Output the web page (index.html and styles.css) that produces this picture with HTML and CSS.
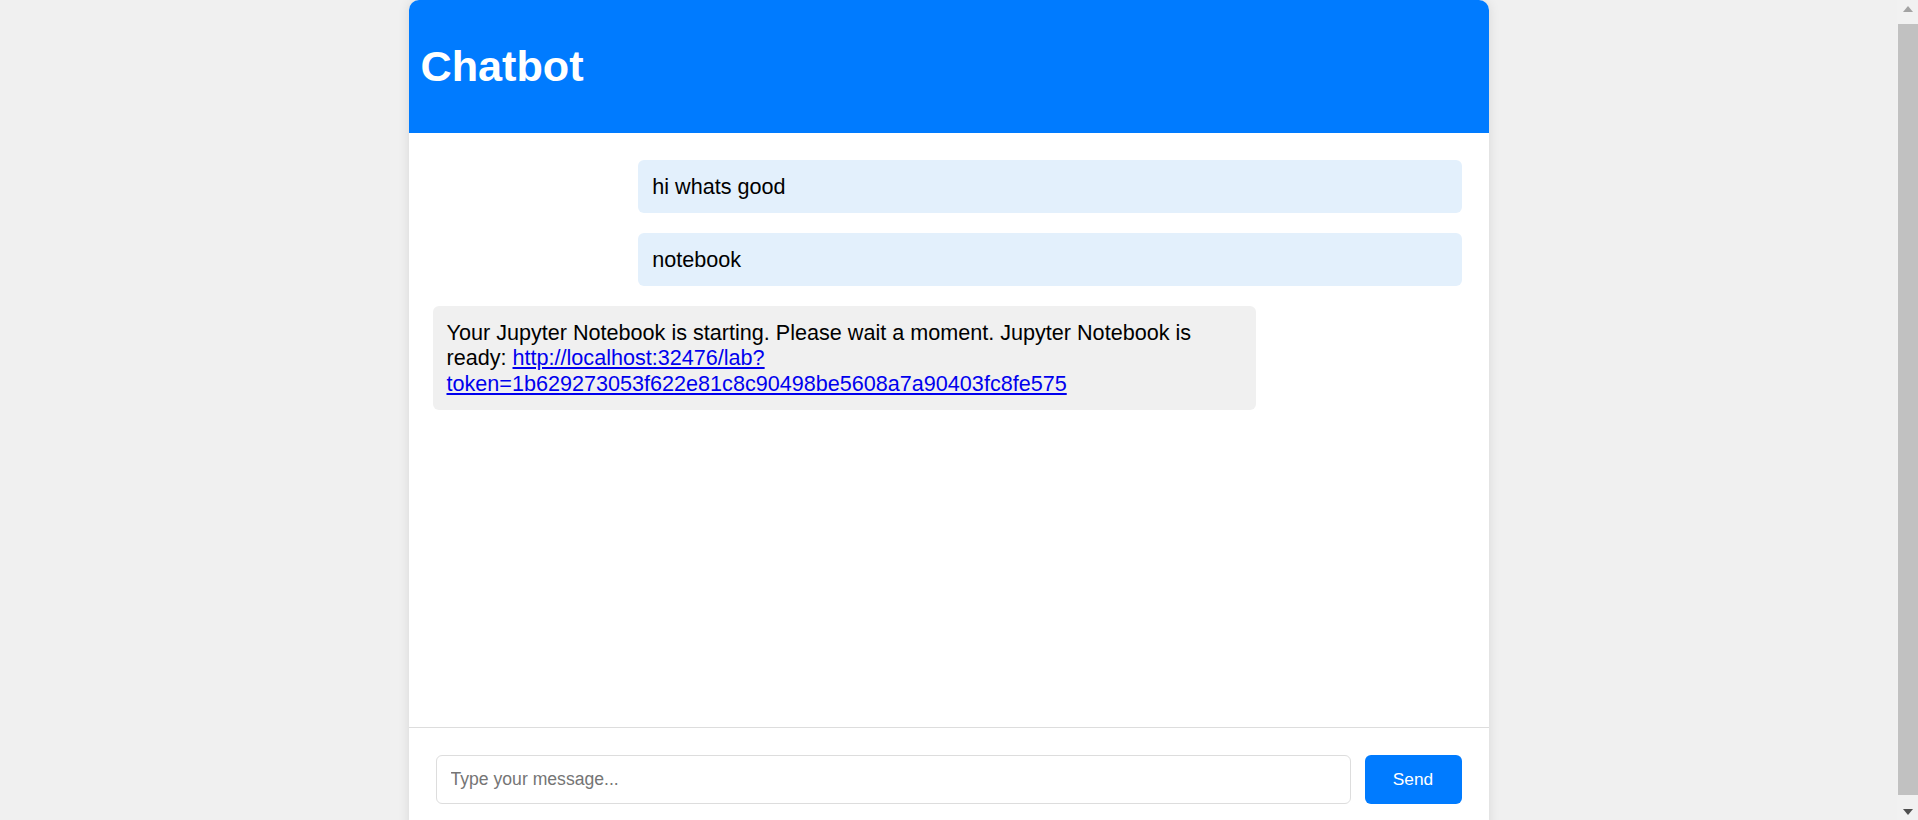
FILE: index.html
```html
<!DOCTYPE html>
<html lang="en">
<head>
<meta charset="utf-8">
<title>Chatbot</title>
<link rel="stylesheet" href="styles.css">
</head>
<body>
<div class="page">
  <div class="chat-container">
    <header class="chat-header">
      <h1>Chatbot</h1>
    </header>
    <div class="chat-messages">
      <div class="msg user">hi whats good</div>
      <div class="msg user">notebook</div>
      <div class="msg bot">Your Jupyter Notebook is starting. Please wait a moment. Jupyter Notebook is ready: <a href="#">http://localhost:32476/lab?token=1b629273053f622e81c8c90498be5608a7a90403fc8fe575</a></div>
    </div>
    <div class="chat-input">
      <input type="text" placeholder="Type your message...">
      <button type="button">Send</button>
    </div>
  </div>
</div>
<div class="scrollbar" aria-hidden="true">
  <div class="sb-arrow sb-up"></div>
  <div class="sb-track"><div class="sb-thumb"></div></div>
  <div class="sb-arrow sb-down"></div>
</div>
</body>
</html>
```

FILE: styles.css
```css
html, body {
  margin: 0;
  padding: 0;
}

body {
  background: #f0f0f0;
  font-family: "Liberation Sans", Arial, sans-serif;
  height: 820px;
  overflow: hidden;
  display: flex;
}

.page {
  flex: 1;
  min-width: 0;
}

.chat-container {
  width: 1080px;
  margin: 0 auto;
  background: #ffffff;
  border-radius: 10px 10px 0 0;
  box-shadow: 0 0 12px rgba(0, 0, 0, 0.1);
  display: flex;
  flex-direction: column;
}

.chat-header {
  background: #007bff;
  color: #ffffff;
  padding: 12px 12px 13px;
  border-radius: 10px 10px 0 0;
}

.chat-header h1 {
  margin: 29px 0;
  font-size: 43.2px;
  font-weight: bold;
  line-height: 50px;
}

.chat-messages {
  height: 594px;
  box-sizing: border-box;
  padding: 27px 27px 27px 24px;
  display: flex;
  flex-direction: column;
  gap: 20px;
  overflow: hidden;
}

.msg {
  width: 80%;
  box-sizing: border-box;
  padding: 13.75px 14px;
  border-radius: 6px;
  font-size: 21.6px;
  line-height: 25.5px;
  color: #000000;
}

.msg.user {
  background: #e3f0fc;
  margin-left: auto;
}

.msg.bot {
  background: #f0f0f0;
}

.msg a {
  color: #0000ee;
}

.chat-input {
  border-top: 1px solid #dddddd;
  padding: 27px 27px 27px 27px;
  display: flex;
  gap: 14px;
}

.chat-input input {
  flex: 1;
  height: 49px;
  box-sizing: border-box;
  padding: 0 14px;
  border: 1px solid #dddddd;
  border-radius: 6px;
  font-family: "Liberation Sans", Arial, sans-serif;
  font-size: 17.6px;
  color: #000;
  outline: none;
}

.chat-input input::placeholder {
  color: #757575;
}

.chat-input button {
  height: 49px;
  width: 97px;
  border: none;
  border-radius: 6px;
  background: #007bff;
  color: #ffffff;
  font-family: "Liberation Sans", Arial, sans-serif;
  font-size: 17.3px;
  cursor: pointer;
}

/* classic scrollbar drawn as a flow column */
.scrollbar {
  width: 21px;
  flex: none;
  background: #f1f1f1;
  display: flex;
  flex-direction: column;
}

.sb-arrow {
  height: 21px;
  display: flex;
  align-items: center;
  justify-content: center;
}

.sb-up::before,
.sb-down::before {
  content: "";
  width: 0;
  height: 0;
  border-left: 5px solid transparent;
  border-right: 5px solid transparent;
}

.sb-up::before {
  border-bottom: 6px solid #a3a3a3;
  margin-top: -4px;
}

.sb-down::before {
  border-top: 6px solid #505050;
  margin-top: 4px;
}

.sb-track {
  flex: 1;
  padding: 3px 0 4px 1px;
  display: flex;
}

.sb-thumb {
  flex: 1;
  background: #c1c1c1;
}
```
